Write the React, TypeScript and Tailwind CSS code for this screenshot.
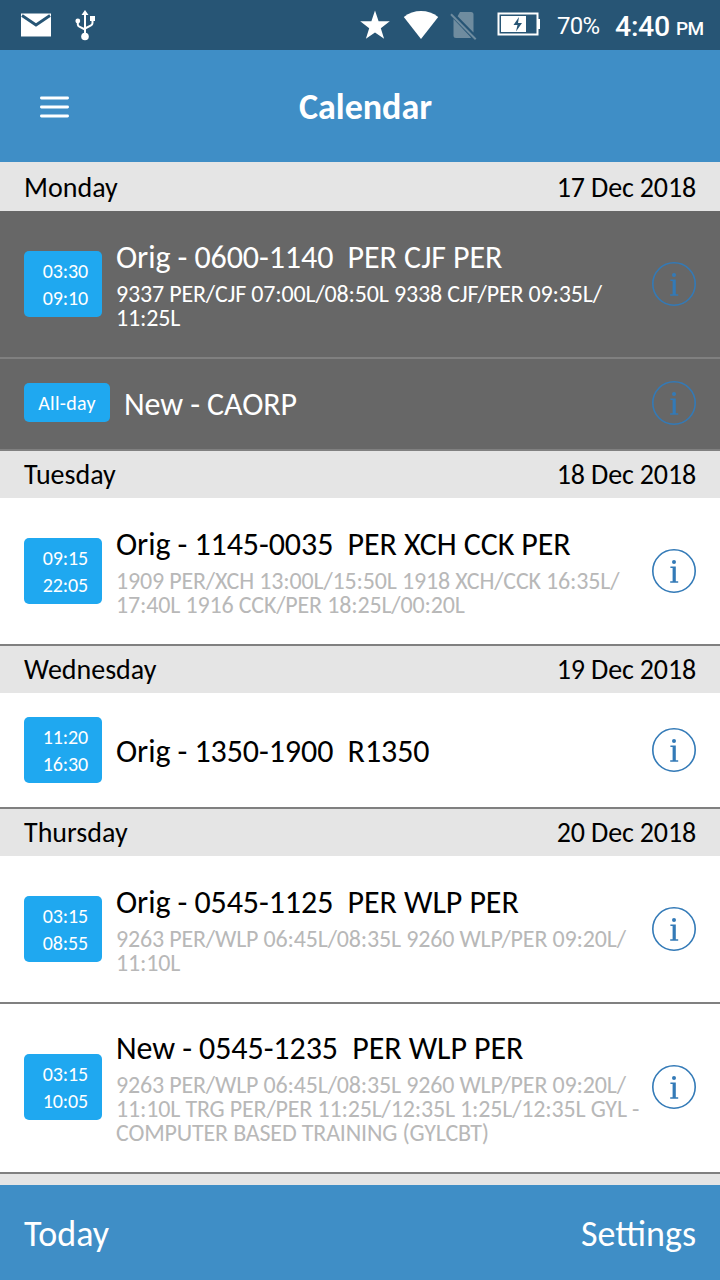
import React from 'react';

interface Duty {
  id: number;
  start?: string;
  end?: string;
  title: string;
  details?: string[];
  past?: boolean;
  rowClass: string;
  titleClass?: string;
}

interface Day {
  name: string;
  date: string;
  duties: Duty[];
}

const DAYS: Day[] = [
  {
    name: 'Monday',
    date: '17 Dec 2018',
    duties: [
      {
        id: 1,
        start: '03:30',
        end: '09:10',
        title: 'Orig - 0600-1140  PER CJF PER',
        details: ['9337 PER/CJF 07:00L/08:50L 9338 CJF/PER 09:35L/', '11:25L'],
        past: true,
        rowClass: 'h-[148px]',
      },
      { id: 2, title: 'New - CAORP', past: true, rowClass: 'h-[92px] pb-[2px]', titleClass: 'pt-[4px]' },
    ],
  },
  {
    name: 'Tuesday',
    date: '18 Dec 2018',
    duties: [
      {
        id: 3,
        start: '09:15',
        end: '22:05',
        title: 'Orig - 1145-0035  PER XCH CCK PER',
        details: ['1909 PER/XCH 13:00L/15:50L 1918 XCH/CCK 16:35L/', '17:40L 1916 CCK/PER 18:25L/00:20L'],
        rowClass: 'h-[148px]',
      },
    ],
  },
  {
    name: 'Wednesday',
    date: '19 Dec 2018',
    duties: [
      {
        id: 4,
        start: '11:20',
        end: '16:30',
        title: 'Orig - 1350-1900  R1350',
        rowClass: 'h-[116px]',
        titleClass: 'pt-[4px]',
      },
    ],
  },
  {
    name: 'Thursday',
    date: '20 Dec 2018',
    duties: [
      {
        id: 5,
        start: '03:15',
        end: '08:55',
        title: 'Orig - 0545-1125  PER WLP PER',
        details: ['9263 PER/WLP 06:45L/08:35L 9260 WLP/PER 09:20L/', '11:10L'],
        rowClass: 'h-[148px]',
      },
      {
        id: 6,
        start: '03:15',
        end: '10:05',
        title: 'New - 0545-1235  PER WLP PER',
        details: [
          '9263 PER/WLP 06:45L/08:35L 9260 WLP/PER 09:20L/',
          '11:10L TRG PER/PER 11:25L/12:35L 1:25L/12:35L GYL -',
          'COMPUTER BASED TRAINING (GYLCBT)',
        ],
        rowClass: 'h-[170px] pb-[2px]',
      },
    ],
  },
];

const InfoIcon: React.FC = () => (
  <svg className="w-11 h-11 shrink-0 text-[#337ab7]" viewBox="0 0 44 44" fill="none">
    <circle cx="22" cy="22" r="21.2" stroke="currentColor" strokeWidth="1.6" />
    <circle cx="22" cy="13" r="2" fill="currentColor" />
    <path d="M18.4 17.6h5.4v14.6h2.4v1.5h-8v-1.5h2.4V19.1h-2.2z" fill="currentColor" />
  </svg>
);

const UsbIcon: React.FC = () => (
  <svg className="w-[22px] h-8" viewBox="0 0 22 32">
    <path d="M10 1l3.5 5h-7zM15 7h5v5h-5z" fill="white" />
    <circle cx="2.8" cy="12" r="2.4" fill="white" />
    <circle cx="10" cy="27.5" r="3.8" fill="white" />
    <path d="M10 5v20M2.8 12v3.5q0 1.5 1.5 2.2L10 20.5M17.5 11v3q0 1.6-1.5 2.3L10 19.5" fill="none" stroke="white" strokeWidth="2" />
  </svg>
);

const StatusBar: React.FC = () => (
  <div className="h-[50px] shrink-0 bg-[#275575] text-white flex items-center font-[Roboto,sans-serif]">
    <svg className="ml-5 w-8 h-6" viewBox="0 0 32 24">
      <path d="M1 0.5h30v23H1z" fill="white" />
      <path d="M2 2.5l14 9.5 14-9.5" fill="none" stroke="#275575" strokeWidth="2.8" />
    </svg>
    <div className="ml-[23px]">
      <UsbIcon />
    </div>
    <svg className="ml-[263px] w-[30px] h-[30px]" viewBox="0 0 30 30">
      <path d="M15 0.5l3.6 10.7 11.2.1-9 6.9 3.3 10.6-9.1-6.4-9.1 6.4 3.3-10.6-9-6.9 11.2-.1z" fill="white" />
    </svg>
    <svg className="ml-[13px] w-9 h-[30px]" viewBox="0 0 36 30">
      <path d="M.8 6.9Q8.5 1 18 1t17.2 5.9L18 29z" fill="white" />
    </svg>
    <svg className="ml-[11px] w-7 h-[30px] text-[#6f8c9f]" viewBox="0 0 28 30">
      <path d="M10 2h11q2.5 0 2.5 2.5v18L7.6 6.2zM3.5 9L21 27.5q-.5.5-1.5.5H6q-2.5 0-2.5-2.5z" fill="currentColor" />
      <path d="M1 4.2l24.7 25" stroke="currentColor" strokeWidth="2" />
    </svg>
    <svg className="ml-[19px] w-11 h-6 -mt-[2px]" viewBox="0 0 44 24">
      <path d="M1.5 1.5h39v21h-39z" fill="none" stroke="white" strokeWidth="2" />
      <path d="M41 7h2v10h-2zM4 4h25v16H4z" fill="white" />
      <path d="M22 5l-5.5 8h4l-1.5 6.5 6-8.5h-4z" fill="#275575" />
    </svg>
    <span className="ml-[16px] w-[44px] text-2xl tracking-[-0.7px] pt-[2px]">70%</span>
    <span className="ml-[14px] text-[28.5px] leading-8 font-medium tracking-[-0.3px] pt-[3px]">4:40</span>
    <span className="ml-[6px] text-[19px] leading-6 font-medium tracking-[-0.5px] pt-[8px]">PM</span>
  </div>
);

const TimeBadge: React.FC<{ duty: Duty }> = ({ duty }) => {
  if (!duty.start) {
    return (
      <div className="w-[86px] h-[39px] mr-[14px] mb-px shrink-0 rounded-[5px] bg-[#1fa8f0] text-white text-[20px] tracking-[0.3px] flex items-center justify-center">
        All-day
      </div>
    );
  }
  return (
    <div className="w-[78px] h-[66px] mr-[14px] shrink-0 rounded-[5px] bg-[#1fa8f0] text-white text-[20px] leading-[27px] tracking-[-0.15px] text-right pr-[14px] pt-[7px]">
      <div>{duty.start}</div>
      <div>{duty.end}</div>
    </div>
  );
};

const DutyRow: React.FC<{ duty: Duty }> = ({ duty }) => (
  <div
    className={`flex items-center shrink-0 px-6 border-b-2 border-[#808080] ${duty.rowClass} ${
      duty.past ? 'bg-[#676767] text-white' : 'bg-white text-black'
    }`}
  >
    <TimeBadge duty={duty} />
    <div className="flex-1 min-w-0 whitespace-pre">
      <div className={`text-[32px] leading-[38px] tracking-[-0.08px] ${duty.titleClass ?? 'pt-px'}`}>{duty.title}</div>
      {duty.details && (
        <div className={`mt-[5px] text-[24px] leading-6 tracking-[-0.17px] ${duty.past ? 'text-white' : 'text-[#b8b8b8]'}`}>
          {duty.details.map((line, i) => (
            <div key={i}>{line}</div>
          ))}
        </div>
      )}
    </div>
    <InfoIcon />
  </div>
);

const DayHeader: React.FC<{ name: string; date: string; first?: boolean }> = ({ name, date, first }) => (
  <div
    className={`shrink-0 px-6 bg-[#e5e5e5] text-black text-[28px] flex items-center justify-between ${
      first ? 'h-[49px] pt-[3px]' : 'h-[47px] pt-px'
    }`}
  >
    <span>{name}</span>
    <span className="tracking-[-0.15px]">{date}</span>
  </div>
);

export default function App() {
  return (
    <div className="w-[720px] h-[1280px] overflow-hidden flex flex-col font-[Carlito,Calibri,Lato,sans-serif] bg-white">
      <StatusBar />

      {/* Title bar */}
      <header className="h-[112px] shrink-0 bg-[#3f8ec6] text-white grid grid-cols-3 items-center px-10">
        <svg className="w-[29px] h-[22px] mt-px" viewBox="0 0 29 22" stroke="white" strokeWidth="2.8" strokeLinecap="round">
          <path d="M1.4 2h26.2M1.4 11h26.2M1.4 20h26.2" />
        </svg>
        <h1 className="text-[36px] font-bold text-center pl-[11px] pt-[2px]">Calendar</h1>
      </header>

      <main className="flex-1 min-h-0 overflow-hidden flex flex-col">
        {DAYS.map((day, index) => (
          <React.Fragment key={day.name}>
            <DayHeader name={day.name} date={day.date} first={index === 0} />
            {day.duties.map(duty => (
              <DutyRow key={duty.id} duty={duty} />
            ))}
          </React.Fragment>
        ))}
        <div className="flex-1 bg-[#e5e5e5]" />
      </main>

      <footer className="h-[95px] shrink-0 bg-[#3f8ec6] text-white text-[36px] px-6 flex items-center justify-between pt-[2px]">
        <span>Today</span>
        <span>Settings</span>
      </footer>
    </div>
  );
}
